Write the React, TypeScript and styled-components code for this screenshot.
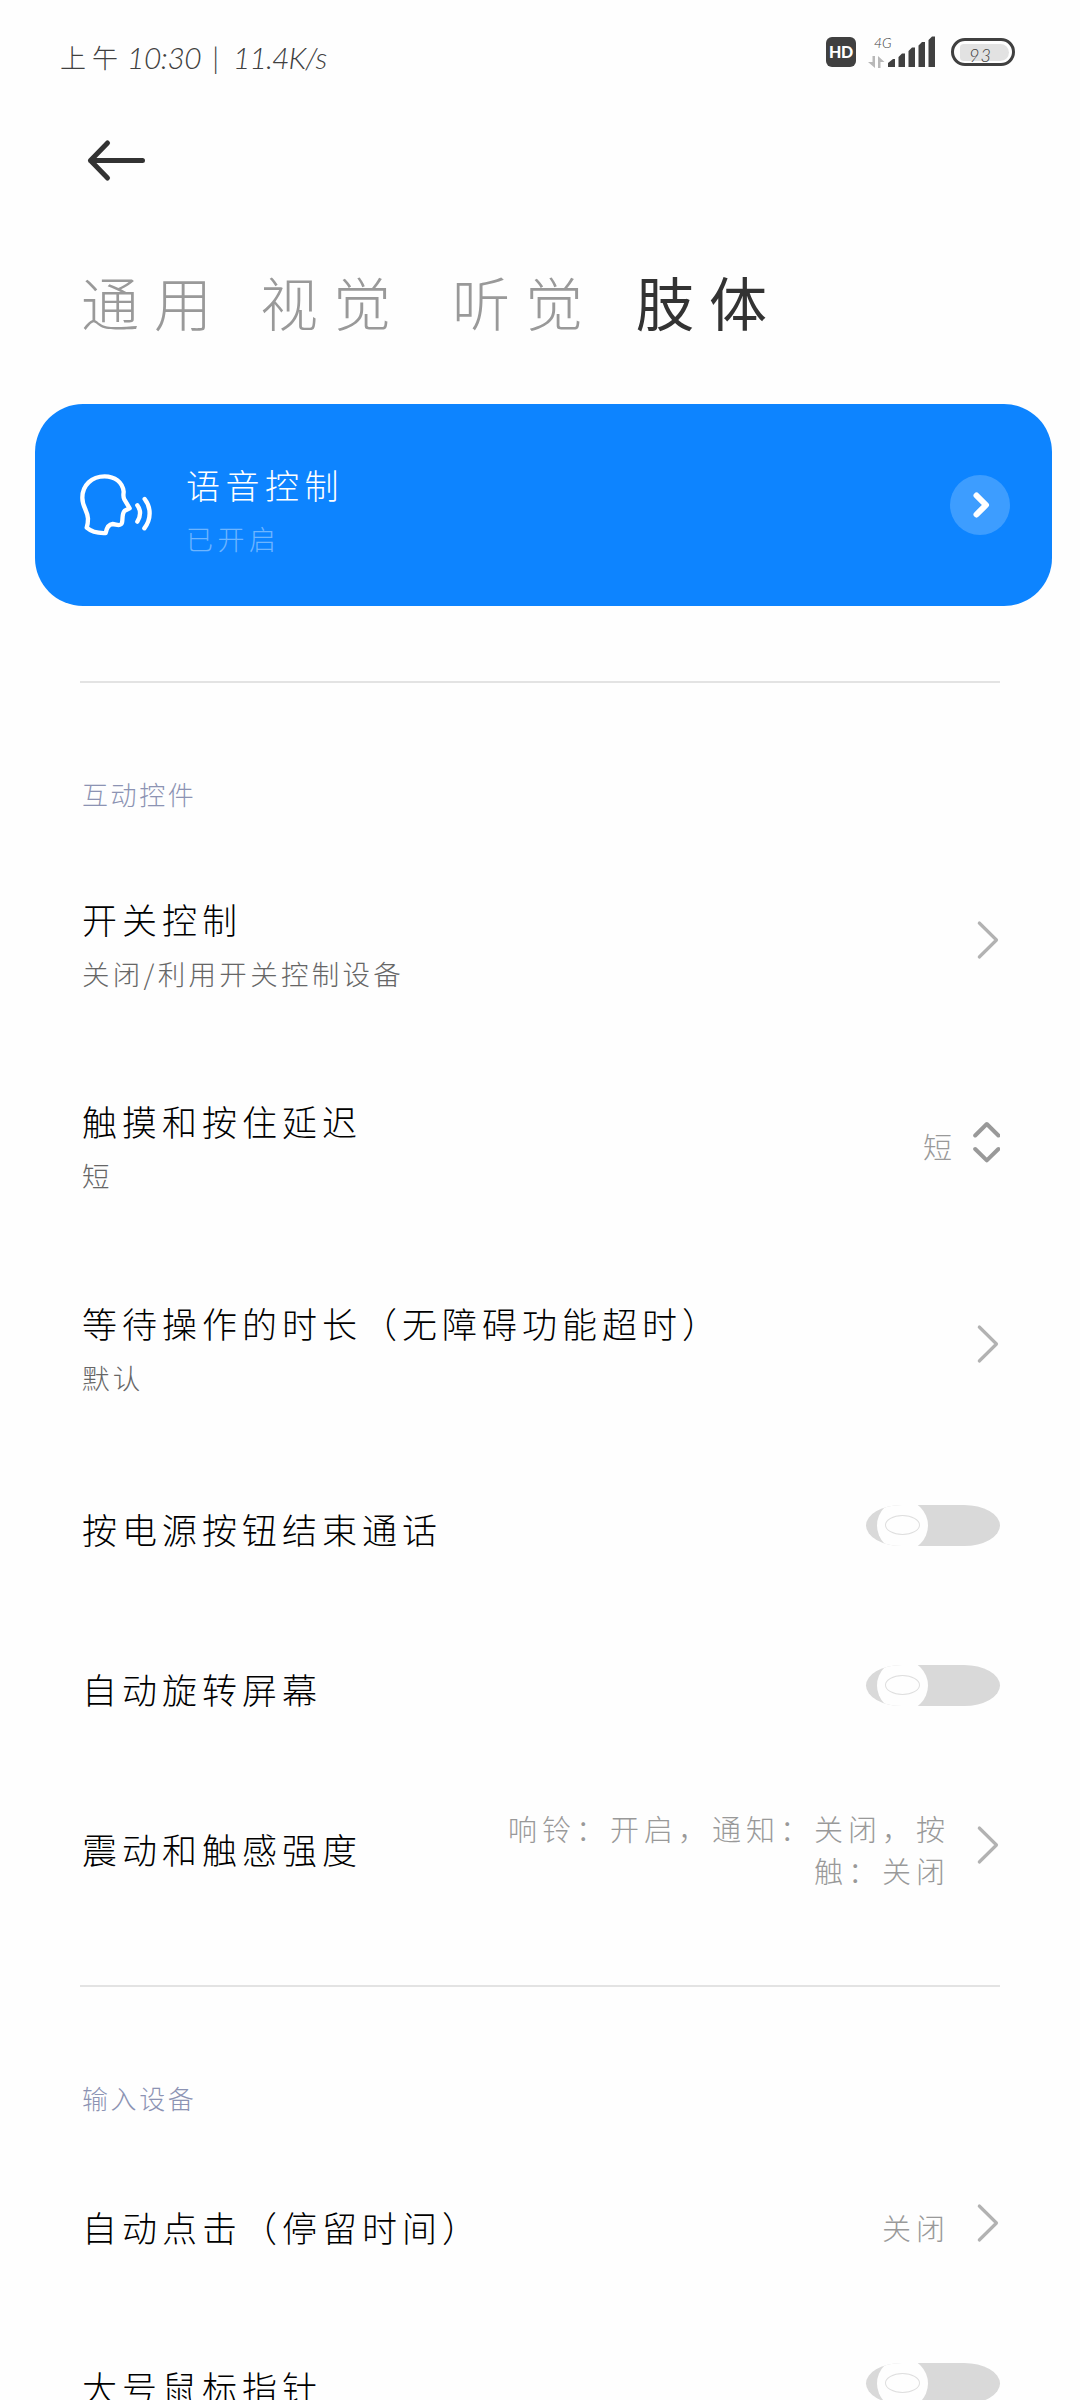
import React from "react";
import styled, { createGlobalStyle } from "styled-components";

const GlobalStyle = createGlobalStyle`
  html, body { margin: 0; padding: 0; background: #fefefe; }
  body { height: 2400px; overflow: hidden; }
  * { box-sizing: border-box; }
`;

const Screen = styled.main`
  width: 1080px;
  height: 2400px;
  overflow: hidden;
  display: flex;
  flex-direction: column;
  background: #fefefe;
  font-family: "Noto Sans CJK SC", "Noto Sans", sans-serif;
  font-weight: 300;
  color: #000;
  white-space: nowrap;
`;

const StatusBar = styled.header`
  flex: none;
  height: 104px;
  padding: 0 65px 0 60px;
  display: flex;
  align-items: center;
  justify-content: space-between;
  color: #404040;
`;

const Clock = styled.div`
  display: flex;
  align-items: center;
  height: 40px;
  margin-top: 10px;
  line-height: 40px;
`;

const Meridiem = styled.span`
  width: 67px;
  font-size: 26px;
  letter-spacing: 6px;
`;

const ClockPart = styled.span<{ $width: number; $spacing: number }>`
  width: ${(p) => p.$width}px;
  font-family: Lato, "Open Sans", sans-serif;
  font-style: italic;
  font-size: 30px;
  letter-spacing: ${(p) => p.$spacing}px;
`;

const StatusIcons = styled.div`
  display: flex;
  align-items: center;
  height: 32px;
`;

const HdBadge = styled.div`
  width: 30px;
  height: 30px;
  border-radius: 6px;
  background: #404040;
  color: #fff;
  font: 900 16px/30px Lato, "Open Sans", sans-serif;
  letter-spacing: -0.4px;
  text-align: center;
`;

const Signal = styled.div`
  width: 67px;
  height: 32px;
  margin-left: 12px;
  display: grid;
  grid-template-columns: 20px 47px;
  align-items: end;
`;

const Network = styled.div`
  height: 32px;
  display: flex;
  flex-direction: column;
  justify-content: space-between;
`;

const NetworkLabel = styled.span`
  margin-left: 6px;
  font: italic 300 14px/13px Lato, "Open Sans", sans-serif;
`;

const Battery = styled.div`
  width: 64px;
  height: 28px;
  margin-left: 16px;
  padding: 3px 3px 3px 6px;
  border: 3px solid #404040;
  border-radius: 14px;
`;

const BatteryLevel = styled.div`
  width: 49px;
  height: 17px;
  border-radius: 4px 9px 9px 4px;
  background: #e2e2e2;
  padding-left: 9px;
  font: italic 300 18px/22px Lato, "Open Sans", sans-serif;
  letter-spacing: 1px;
`;

const TitleBar = styled.div`
  flex: none;
  height: 113px;
  padding: 34px 0 0 84px;
`;

const Tabs = styled.nav`
  flex: none;
  height: 187px;
  padding: 42px 0 0 81px;
  display: flex;
`;

const Tab = styled.span<{ $active?: boolean; $width: number }>`
  width: ${(p) => p.$width}px;
  font-size: 58px;
  line-height: 84px;
  letter-spacing: 15px;
  font-weight: ${(p) => (p.$active ? 400 : 300)};
  color: ${(p) => (p.$active ? "#333" : "#999")};
`;

const Card = styled.section`
  flex: none;
  height: 202px;
  margin: 0 28px 0 35px;
  padding: 0 42px 0 43px;
  border-radius: 48px;
  background: #0d84ff;
  display: flex;
  align-items: center;
`;

const CardText = styled.div`
  flex: 1;
  margin-left: 31px;
  padding-top: 14px;
  display: flex;
  flex-direction: column;
`;

const CardTitle = styled.span`
  color: #fff;
  font-size: 34px;
  line-height: 54px;
  letter-spacing: 5.5px;
`;

const CardStatus = styled.span`
  color: #6db5ff;
  font-size: 27px;
  line-height: 54px;
  letter-spacing: 4.5px;
`;

const CardButton = styled.div`
  width: 60px;
  height: 60px;
  border-radius: 50%;
  background: #3d9dff;
  display: flex;
  align-items: center;
  justify-content: center;
`;

const Group = styled.section<{ $top: number }>`
  flex: none;
  margin: ${(p) => p.$top}px 80px 0;
  border-top: 2px solid #e3e3e3;
`;

const GroupTitle = styled.h2`
  height: 156px;
  margin: 0;
  padding: 91px 0 0 2px;
  font-size: 26px;
  font-weight: 300;
  line-height: 40px;
  letter-spacing: 2.6px;
  color: #8c93b3;
`;

const Row = styled.div<{ $tall?: boolean }>`
  height: ${(p) => (p.$tall ? 202 : 160)}px;
  padding: 0 0 0 2px;
  display: flex;
  align-items: center;
  justify-content: space-between;
`;

const RowText = styled.div<{ $tall: boolean }>`
  display: flex;
  flex-direction: column;
  padding-top: ${(p) => (p.$tall ? 12 : 8)}px;
`;

const RowTitle = styled.span`
  font-size: 35px;
  line-height: 54px;
  letter-spacing: 5px;
`;

const RowSummary = styled.span`
  font-size: 27.5px;
  line-height: 54px;
  letter-spacing: 3.3px;
  color: #666;
`;

const RowEnd = styled.div`
  display: flex;
  align-items: center;
`;

const Value = styled.span<{ $gap: number }>`
  padding-top: 8px;
  margin-right: ${(p) => p.$gap}px;
  font-size: 29px;
  line-height: 42px;
  letter-spacing: 5px;
  text-align: right;
  white-space: pre-line;
  color: #999;
`;

const Track = styled.div`
  width: 134px;
  height: 41px;
  padding-left: 11px;
  border-radius: 36px / 20.5px;
  background: #d9d9d9;
  overflow: hidden;
  display: flex;
  align-items: center;
`;

const Knob = styled.div`
  flex: none;
  width: 51px;
  height: 51px;
  border-radius: 50%;
  background: #fefefe;
  display: flex;
  align-items: center;
  justify-content: center;
`;

const KnobRing = styled.div`
  width: 35px;
  height: 20px;
  border: 1px solid #dedede;
  border-radius: 50%;
`;

const Switch = () => (
  <Track role="switch" aria-checked={false}>
    <Knob>
      <KnobRing />
    </Knob>
  </Track>
);

const Chevron = () => (
  <svg width="24" height="40" viewBox="0 0 24 40" fill="none" stroke="#b2b2b2" strokeWidth="3.2" strokeLinecap="round" strokeLinejoin="round">
    <path d="M3.3 3L20.5 20L3.3 37" />
  </svg>
);

const UpDown = () => (
  <svg width="28" height="44" viewBox="0 0 28 44" fill="none" stroke="#999" strokeWidth="4" strokeLinecap="round" strokeLinejoin="round">
    <path d="M3.2 15.5L14.8 4L26.4 15.5M3.2 29L14.8 40.4L26.4 29" />
  </svg>
);

const BackArrow = () => (
  <svg width="64" height="46" viewBox="0 0 64 46" fill="none" stroke="#333" strokeWidth="5" strokeLinecap="round" strokeLinejoin="round">
    <path d="M6.5 22.5H58.5M23.5 5L6.5 22.5L23.5 40" />
  </svg>
);

const SignalArrows = () => (
  <svg width="17" height="12" viewBox="0 0 17 12" fill="#b8b8b8">
    <path d="M4.5 0H7V12L0 6H4.5ZM10 12V0L16.5 6H12.5V12Z" />
  </svg>
);

const SignalBars = () => (
  <svg width="48" height="32" viewBox="0 0 48 32" fill="#404040">
    <path d="M0 31V27L5 23H7V31ZM10.5 31V21L14 17.5H17V31ZM20.5 31V15L24 11.5H27V31ZM30.5 31V9.500L34 6H37V31ZM40.500 31V4L44 .5H47V31Z" />
  </svg>
);

const VoiceIcon = () => (
  <svg width="77" height="66" viewBox="174 245 231 198" fill="none" stroke="#fff" strokeWidth="13" strokeLinecap="round" strokeLinejoin="round">
    <path d="M200 412C215 425 236 429 257 428C260 412 267 402 278 401C290 402 302 410 306 397C309 385 305 370 314 361L329 354L313 327C308 318 311 310 311 304C308 275 284 258 254 258C215 258 187 285 187 322C187 350 203 361 204 385Q204 401 200 412Z" />
    <path d="M352 345C363 360 363 376 352 394M374 326C394 352 394 386 373 414" />
  </svg>
);

type Item = {
  title: string;
  summary?: string;
  value?: string;
  control: "chevron" | "updown" | "switch";
};

const interaction: Item[] = [
  { title: "开关控制", summary: "关闭/利用开关控制设备", control: "chevron" },
  { title: "触摸和按住延迟", summary: "短", value: "短", control: "updown" },
  { title: "等待操作的时长（无障碍功能超时）", summary: "默认", control: "chevron" },
  { title: "按电源按钮结束通话", control: "switch" },
  { title: "自动旋转屏幕", control: "switch" },
  { title: "震动和触感强度", value: "响铃：开启，通知：关闭，按\n触：关闭", control: "chevron" },
];

const input: Item[] = [
  { title: "自动点击（停留时间）", value: "关闭", control: "chevron" },
  { title: "大号鼠标指针", control: "switch" },
];

const SettingRow = ({ item }: { item: Item }) => (
  <Row $tall={!!item.summary}>
    <RowText $tall={!!item.summary}>
      <RowTitle>{item.title}</RowTitle>
      {item.summary && <RowSummary>{item.summary}</RowSummary>}
    </RowText>
    <RowEnd>
      {item.value && <Value $gap={item.control === "updown" ? 15 : 26}>{item.value}</Value>}
      {item.control === "chevron" && <Chevron />}
      {item.control === "updown" && <UpDown />}
      {item.control === "switch" && <Switch />}
    </RowEnd>
  </Row>
);

export default function App() {
  return (
    <>
      <GlobalStyle />
      <Screen>
        <StatusBar>
          <Clock>
            <Meridiem>上午</Meridiem>
            <ClockPart $width={85} $spacing={-0.5}>10:30</ClockPart>
            <ClockPart $width={21} $spacing={0}>|</ClockPart>
            <ClockPart $width={96} $spacing={-0.9}>11.4K/s</ClockPart>
          </Clock>
          <StatusIcons>
            <HdBadge>HD</HdBadge>
            <Signal>
              <Network>
                <NetworkLabel>4G</NetworkLabel>
                <SignalArrows />
              </Network>
              <SignalBars />
            </Signal>
            <Battery>
              <BatteryLevel>93</BatteryLevel>
            </Battery>
          </StatusIcons>
        </StatusBar>
        <TitleBar>
          <BackArrow />
        </TitleBar>
        <Tabs>
          <Tab $width={179}>通用</Tab>
          <Tab $width={192}>视觉</Tab>
          <Tab $width={184}>听觉</Tab>
          <Tab $width={150} $active>肢体</Tab>
        </Tabs>
        <Card>
          <VoiceIcon />
          <CardText>
            <CardTitle>语音控制</CardTitle>
            <CardStatus>已开启</CardStatus>
          </CardText>
          <CardButton>
            <svg width="20" height="30" viewBox="0 0 20 30" fill="none" stroke="#fff" strokeWidth="6" strokeLinecap="round" strokeLinejoin="round">
              <path d="M6.500 5.500L16 15L6.500 24.500" />
            </svg>
          </CardButton>
        </Card>
        <Group $top={75}>
          <GroupTitle>互动控件</GroupTitle>
          {interaction.map((item) => (
            <SettingRow key={item.title} item={item} />
          ))}
        </Group>
        <Group $top={60}>
          <GroupTitle>输入设备</GroupTitle>
          {input.map((item) => (
            <SettingRow key={item.title} item={item} />
          ))}
        </Group>
      </Screen>
    </>
  );
}
